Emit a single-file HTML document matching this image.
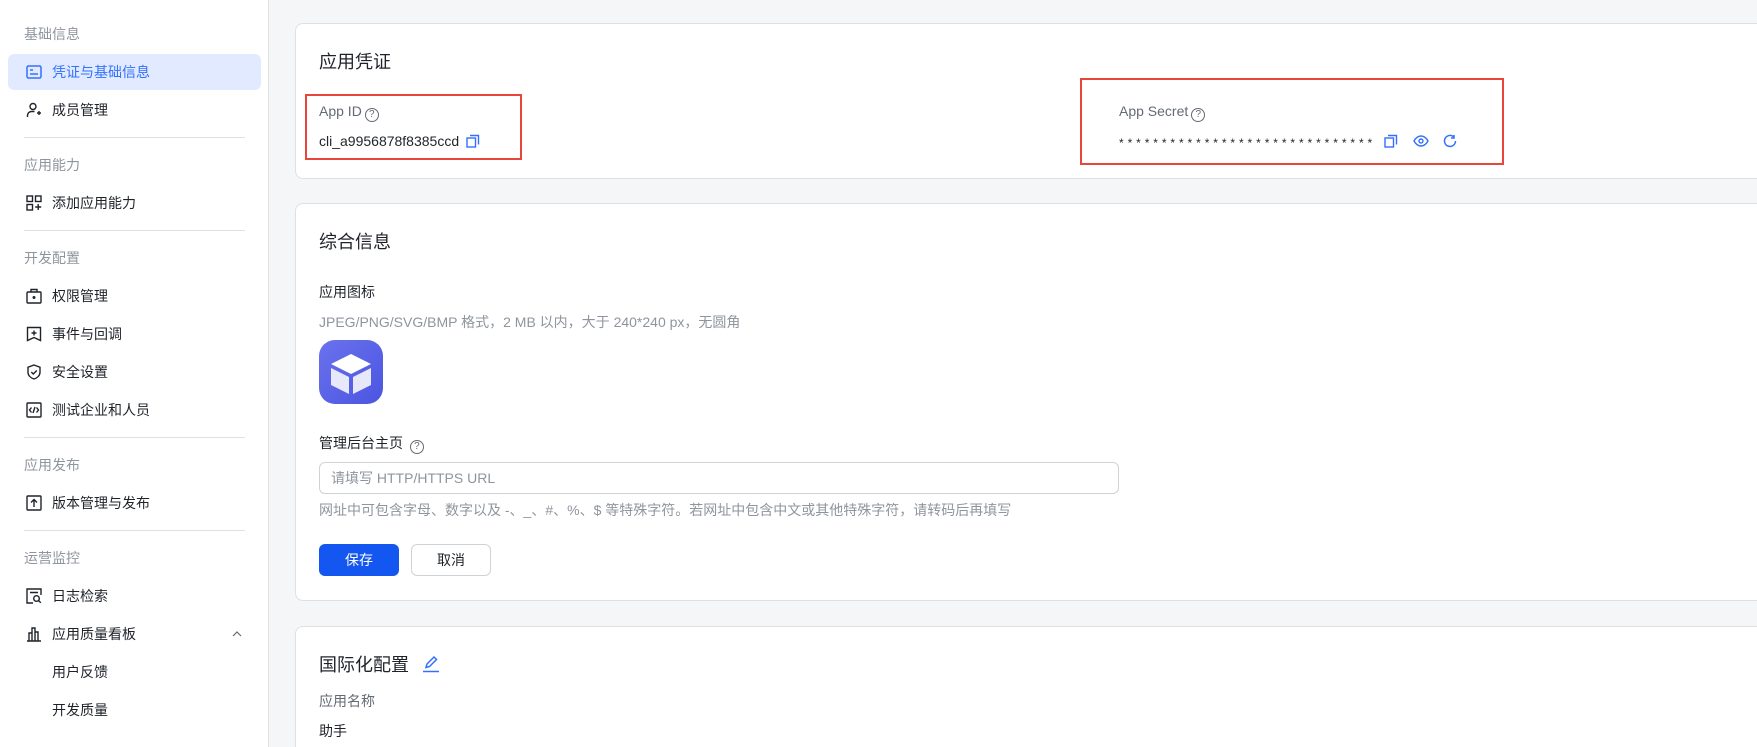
<!DOCTYPE html>
<html><head><meta charset="utf-8"><style>
*{box-sizing:border-box;margin:0;padding:0}
html,body{width:1757px;height:747px;overflow:hidden}
body{background:#f5f6f7;font-family:"Liberation Sans","Noto Sans CJK SC",sans-serif;color:#1f2329;position:relative}
.sb{position:absolute;left:0;top:0;width:269px;height:747px;background:#fff;border-right:1px solid #dee0e3}
.lab{position:absolute;left:24px;font-size:14px;color:#8f959e;line-height:20px}
.it{position:absolute;left:8px;width:253px;height:36px;font-size:14px;line-height:36px;padding-left:44px}
.it svg{position:absolute;left:18px;top:10px}
.act{background:#e1eaff;color:#3370ff;border-radius:6px}
.dv{position:absolute;left:24px;width:221px;height:1px;background:#dee0e3}
.card{position:absolute;left:295px;width:1500px;background:#fff;border:1px solid #dee0e3;border-radius:8px}
.t{position:absolute;font-size:14px;line-height:20px}
.ab{position:absolute}
.red{position:absolute;border:2px solid #e8463b}
.q{display:inline-block;width:14px;height:14px;border:1.3px solid #646a73;border-radius:50%;font-size:10px;line-height:11.5px;text-align:center;vertical-align:-1px;color:#646a73;margin-left:3px}
</style></head><body>
<div class="sb">
<div class="lab" style="top:24px">基础信息</div>
<div class="it act" style="top:54px"><svg width="16" height="16" viewBox="0 0 16 16" fill="none" stroke="#3370ff" stroke-width="1.5"><rect x="1" y="2" width="14" height="12" rx="1.5"/><path d="M4 6h3M4 10h8"/></svg>凭证与基础信息</div>
<div class="it" style="top:92px"><svg width="16" height="16" viewBox="0 0 16 16" fill="none" stroke="#1f2329" stroke-width="1.4"><circle cx="7" cy="4.5" r="3"/><path d="M1.5 15v-1.5a4 4 0 0 1 4-4h3M11 11h4M13 9v4"/></svg>成员管理</div>
<div class="dv" style="top:137px"></div>
<div class="lab" style="top:155px">应用能力</div>
<div class="it" style="top:185px"><svg width="16" height="16" viewBox="0 0 16 16" fill="none" stroke="#1f2329" stroke-width="1.4"><rect x="1" y="1" width="5.5" height="5.5"/><rect x="9.5" y="1" width="5.5" height="5.5"/><rect x="1" y="9.5" width="5.5" height="5.5"/><path d="M12.2 9v6M9.2 12h6"/></svg>添加应用能力</div>
<div class="dv" style="top:230px"></div>
<div class="lab" style="top:248px">开发配置</div>
<div class="it" style="top:278px"><svg width="16" height="16" viewBox="0 0 16 16" fill="none" stroke="#1f2329" stroke-width="1.4"><rect x="1" y="4" width="14" height="11" rx="1"/><path d="M5 4V1.5h6V4"/><circle cx="8" cy="9.5" r=".8" fill="#1f2329"/></svg>权限管理</div>
<div class="it" style="top:316px"><svg width="16" height="16" viewBox="0 0 16 16" fill="none" stroke="#1f2329" stroke-width="1.4"><path d="M1.5 1.5h13v13l-6.5-3-6.5 3z"/><path d="M8 4.5v5M5.5 7h5"/></svg>事件与回调</div>
<div class="it" style="top:354px"><svg width="16" height="16" viewBox="0 0 16 16" fill="none" stroke="#1f2329" stroke-width="1.4"><path d="M8 1l6 2.2v5c0 3.5-3 5.8-6 6.8-3-1-6-3.3-6-6.8v-5z"/><path d="M5.3 8l2 2 3.5-3.5"/></svg>安全设置</div>
<div class="it" style="top:392px"><svg width="16" height="16" viewBox="0 0 16 16" fill="none" stroke="#1f2329" stroke-width="1.4"><rect x="1" y="1" width="14" height="14" rx="1"/><path d="M5.5 5.5L3.5 8l2 2.5M10.5 5.5l2 2.5-2 2.5M9 5l-2 6"/></svg>测试企业和人员</div>
<div class="dv" style="top:437px"></div>
<div class="lab" style="top:455px">应用发布</div>
<div class="it" style="top:485px"><svg width="16" height="16" viewBox="0 0 16 16" fill="none" stroke="#1f2329" stroke-width="1.4"><rect x="1" y="1" width="14" height="14" rx="1"/><path d="M8 12V5M5 7.5L8 4.5l3 3"/></svg>版本管理与发布</div>
<div class="dv" style="top:530px"></div>
<div class="lab" style="top:548px">运营监控</div>
<div class="it" style="top:578px"><svg width="16" height="16" viewBox="0 0 16 16" fill="none" stroke="#1f2329" stroke-width="1.4"><path d="M7 15H1V1h14v6M4 4.5h8"/><circle cx="10.5" cy="10.5" r="2.8"/><path d="M12.5 12.5l2.3 2.3"/></svg>日志检索</div>
<div class="it" style="top:616px"><svg width="16" height="16" viewBox="0 0 16 16" fill="none" stroke="#1f2329" stroke-width="1.4"><path d="M1 15h14M3 15V7h3v8M6 15V2h3v13M9 15V6h3v9"/></svg>应用质量看板<svg style="left:224px;top:15px" width="10" height="6" viewBox="0 0 10 6" fill="none" stroke="#646a73" stroke-width="1.2"><path d="M1 5l4-4 4 4"/></svg></div>
<div class="it" style="top:654px">用户反馈</div>
<div class="it" style="top:692px">开发质量</div>
</div>

<div class="card" style="top:23px;height:156px"></div>
<div class="t" style="left:319px;top:50px;font-size:18px;line-height:24px">应用凭证</div>
<div class="red" style="left:305px;top:94px;width:217px;height:66px"></div>
<div class="t" style="left:319px;top:101px;color:#646a73">App ID<span class="q">?</span></div>
<div class="t" style="left:319px;top:131px">cli_a9956878f8385ccd</div>
<svg class="ab" style="left:466px;top:134px" width="14" height="14" viewBox="0 0 14 14" fill="none" stroke="#3370ff" stroke-width="1.4"><rect x="1" y="4" width="8.5" height="9"/><path d="M4 1.5h8.5v9"/></svg>
<div class="red" style="left:1080px;top:78px;width:424px;height:87px"></div>
<div class="t" style="left:1119px;top:101px;color:#646a73">App Secret<span class="q">?</span></div>
<div class="t" style="left:1119px;top:133px;font-size:12px;letter-spacing:3.9px;color:#1f2329;white-space:nowrap">******************************</div>
<svg class="ab" style="left:1384px;top:134px" width="14" height="14" viewBox="0 0 14 14" fill="none" stroke="#3370ff" stroke-width="1.4"><rect x="1" y="4" width="8.5" height="9"/><path d="M4 1.5h8.5v9"/></svg>
<svg class="ab" style="left:1413px;top:134px" width="16" height="14" viewBox="0 0 16 14" fill="none" stroke="#3370ff" stroke-width="1.4"><path d="M1 7c2-3.5 4.5-5 7-5s5 1.5 7 5c-2 3.5-4.5 5-7 5S3 10.5 1 7z"/><circle cx="8" cy="7" r="2"/></svg>
<svg class="ab" style="left:1443px;top:134px" width="14" height="14" viewBox="0 0 14 14" fill="none" stroke="#3370ff" stroke-width="1.5"><path d="M12.5 7A5.5 5.5 0 1 1 10.5 2.7M11 1v3H8"/></svg>

<div class="card" style="top:203px;height:398px"></div>
<div class="t" style="left:319px;top:230px;font-size:18px;line-height:24px">综合信息</div>
<div class="t" style="left:319px;top:282px">应用图标</div>
<div class="t" style="left:319px;top:312px;color:#8f959e">JPEG/PNG/SVG/BMP 格式，2 MB 以内，大于 240*240 px，无圆角</div>
<svg class="ab" style="left:319px;top:340px" width="64" height="64" viewBox="0 0 64 64"><defs><linearGradient id="g" x1="0" y1="0" x2="1" y2="1"><stop offset="0" stop-color="#6b72ee"/><stop offset="1" stop-color="#4a55e0"/></linearGradient></defs><rect width="64" height="64" rx="16" fill="url(#g)"/><path d="M32 14l20 10-20 10-20-10z" fill="#fff"/><path d="M12 28l18 9v17l-18-9z" fill="#e8e8fb"/><path d="M52 28l-18 9v17l18-9z" fill="#e8e8fb"/></svg>
<div class="t" style="left:319px;top:433px">管理后台主页 <span class="q">?</span></div>
<div class="ab" style="left:319px;top:462px;width:800px;height:32px;border:1px solid #d0d3d6;border-radius:6px;font-size:14px;line-height:30px;padding-left:11px;color:#8f959e">请填写 HTTP/HTTPS URL</div>
<div class="t" style="left:319px;top:500px;color:#8f959e">网址中可包含字母、数字以及 -、_、#、%、$ 等特殊字符。若网址中包含中文或其他特殊字符，请转码后再填写</div>
<div class="ab" style="left:319px;top:544px;width:80px;height:32px;background:#1456f0;border-radius:6px;color:#fff;font-size:14px;line-height:32px;text-align:center">保存</div>
<div class="ab" style="left:411px;top:544px;width:80px;height:32px;border:1px solid #d0d3d6;border-radius:6px;font-size:14px;line-height:30px;text-align:center">取消</div>

<div class="card" style="top:626px;height:140px"></div>
<div class="t" style="left:319px;top:653px;font-size:18px;line-height:24px">国际化配置</div>
<svg class="ab" style="left:422px;top:655px" width="18" height="18" viewBox="0 0 18 18" fill="none" stroke="#3370ff" stroke-width="1.5"><path d="M4 12.5l1-3.5 7-7 2.5 2.5-7 7zM1 16.5h16"/></svg>
<div class="t" style="left:319px;top:691px;color:#646a73">应用名称</div>
<div class="t" style="left:319px;top:721px">助手</div>
</body></html>
